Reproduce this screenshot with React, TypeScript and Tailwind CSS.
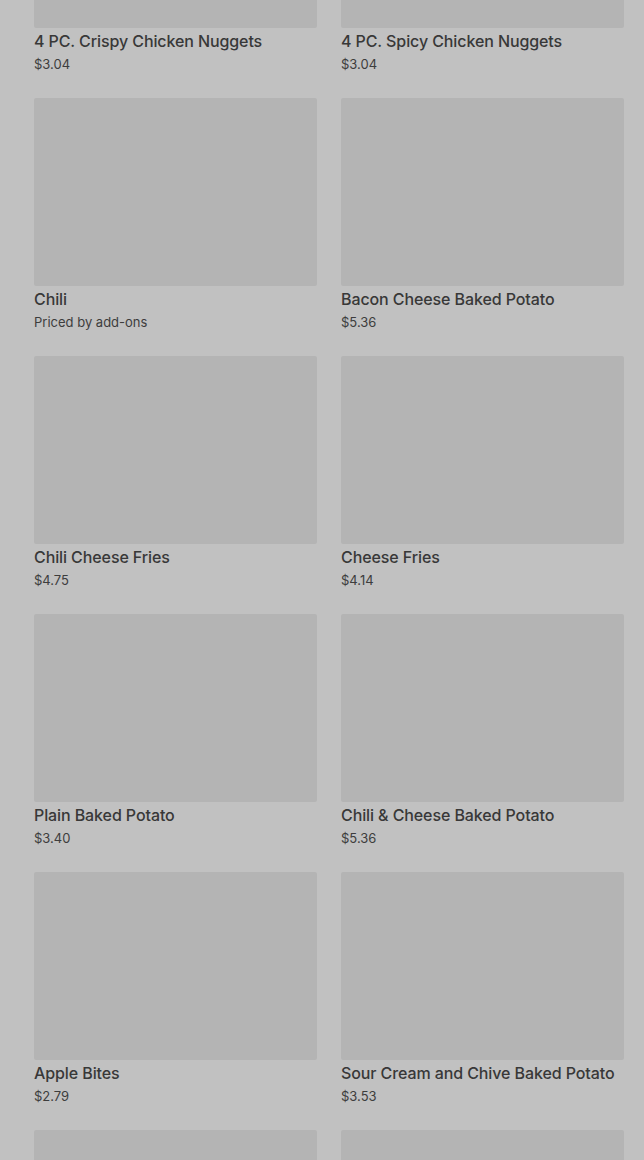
import React from "react";

type Item = { name: string; price: string };

const items: Item[] = [
  { name: "4 PC. Crispy Chicken Nuggets", price: "$3.04" },
  { name: "4 PC. Spicy Chicken Nuggets", price: "$3.04" },
  { name: "Chili", price: "Priced by add-ons" },
  { name: "Bacon Cheese Baked Potato", price: "$5.36" },
  { name: "Chili Cheese Fries", price: "$4.75" },
  { name: "Cheese Fries", price: "$4.14" },
  { name: "Plain Baked Potato", price: "$3.40" },
  { name: "Chili & Cheese Baked Potato", price: "$5.36" },
  { name: "Apple Bites", price: "$2.79" },
  { name: "Sour Cream and Chive Baked Potato", price: "$3.53" },
];

const MenuCard = ({ item }: { item: Item }) => (
  <div className="flex flex-col">
    <div className="h-[188px] w-full rounded-[2px] bg-[#b4b4b4]" />
    <div className="mt-[3px] text-[16px] leading-[20px] font-medium text-[#383838] tracking-[-0.1px]">
      {item.name}
    </div>
    <div className="mt-[3px] text-[13px] leading-[20px] text-[#3d3d3d]">{item.price}</div>
  </div>
);

export default function App() {
  return (
    <div
      className="h-[1160px] w-[644px] overflow-hidden bg-[#c1c1c1]"
      style={{ fontFamily: "Inter, 'Noto Sans', sans-serif" }}
    >
      <div className="mt-[-160px] grid grid-cols-2 gap-x-[24px] gap-y-[24px] pl-[34px] pr-[20px]">
        {items.map((it) => (
          <MenuCard key={it.name} item={it} />
        ))}
        {/* next row, only the top of the pictures is on screen */}
        <div className="h-[188px] rounded-[2px] bg-[#b4b4b4]" />
        <div className="h-[188px] rounded-[2px] bg-[#b4b4b4]" />
      </div>
    </div>
  );
}
